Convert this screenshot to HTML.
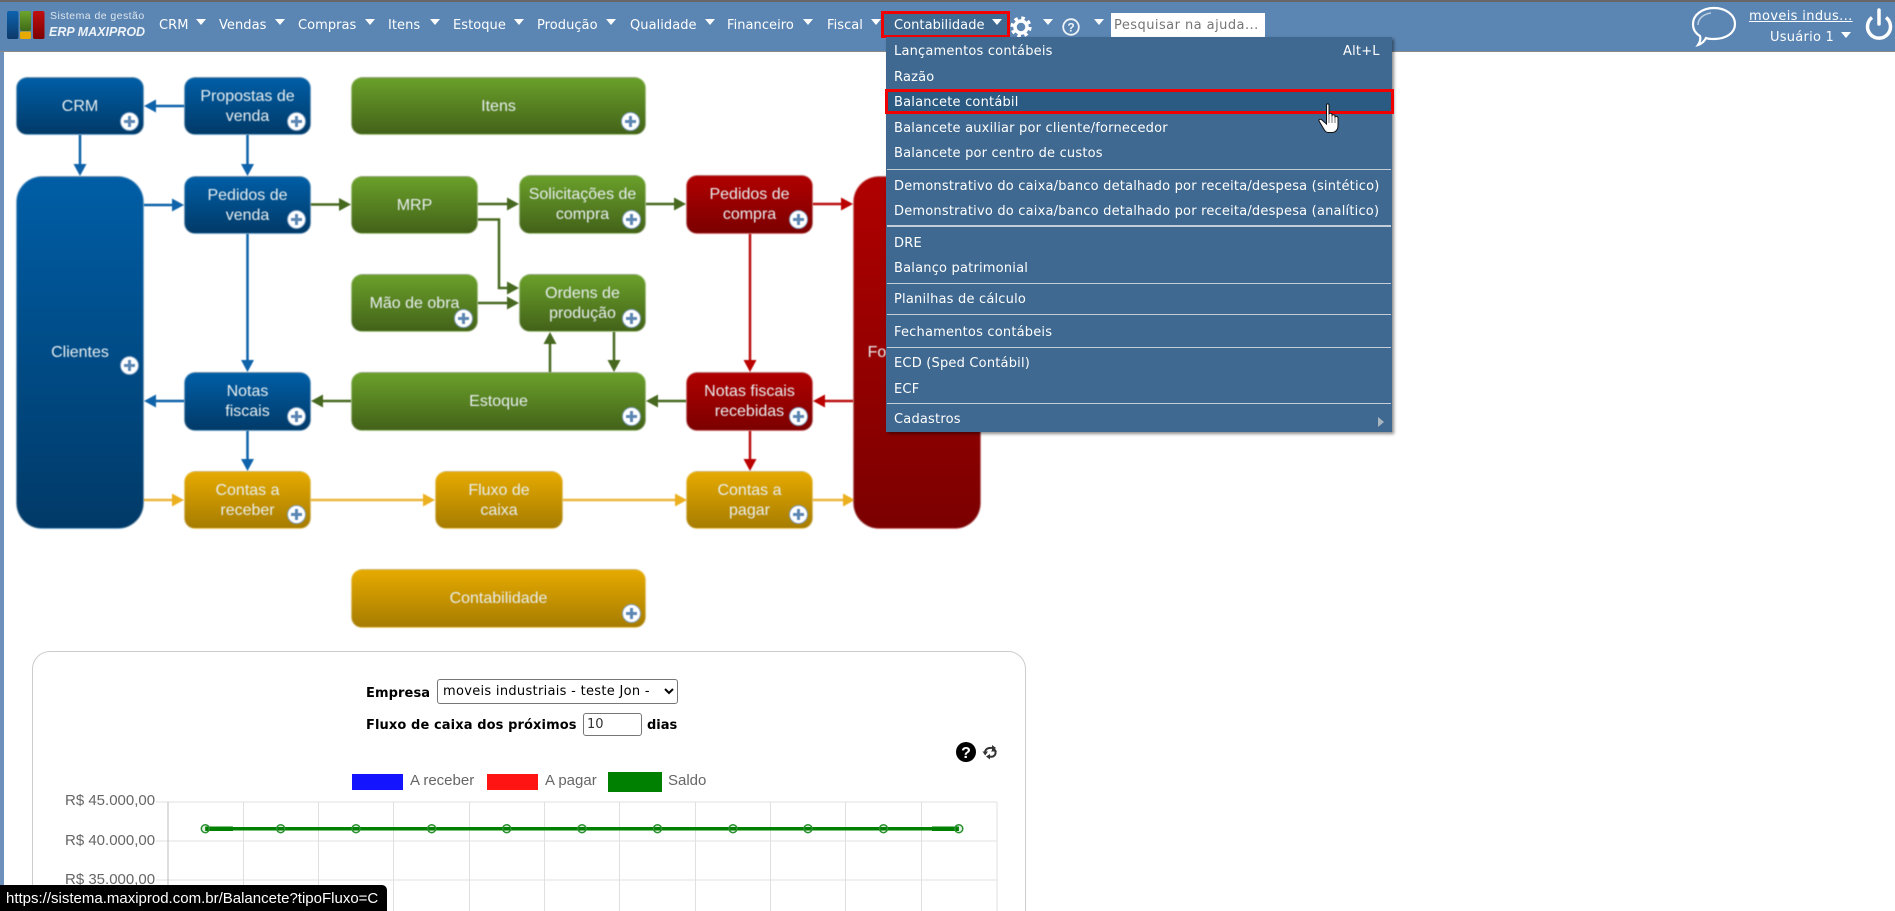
<!DOCTYPE html>
<html lang="pt-BR">
<head>
<meta charset="utf-8">
<title>ERP MAXIPROD</title>
<style>
html,body{margin:0;padding:0;width:1895px;height:911px;overflow:hidden;background:#fff}
body{position:relative;font-family:"DejaVu Sans",Verdana,sans-serif;font-size:13px;color:#000}
.abs{position:absolute;white-space:nowrap}
#strip{position:absolute;left:0;top:0;width:4px;height:911px;background:#6c90bb}
#top{position:absolute;left:0;top:0;width:1895px;height:52px;background:#5b86b3;border-top:2px solid #666;border-bottom:1px solid #8a8a8a;box-sizing:border-box}
.nav{position:absolute;top:17px;height:18px;line-height:18px;color:#fff;font-size:13px;white-space:nowrap;letter-spacing:.05px}
.tri{position:absolute;width:0;height:0;border-left:5px solid transparent;border-right:5px solid transparent;border-top:6px solid #fff;top:19px}
#diagram{position:absolute;left:0;top:0;width:1050px;height:650px;filter:blur(.5px)}
.b{position:absolute;box-sizing:border-box;border:1px solid rgba(255,255,255,.45);border-radius:11px;display:flex;align-items:center;justify-content:center;text-align:center;font-family:"Liberation Sans",Arial,sans-serif;font-size:16px;line-height:20px;color:#e8eef0;padding-top:1px}
.bl{background:linear-gradient(#005ea6,#013a68)}
.gr{background:linear-gradient(#6aa02a,#436219)}
.rd{background:linear-gradient(#b00000,#7c0000)}
.ye{background:linear-gradient(#e6aa00,#a67c00)}
.lg{border-radius:26px}
.p{position:absolute;width:19px;height:19px;box-sizing:border-box;border-radius:50%;background:#fff;border:1px solid #7d9cc0}
.p:before{content:"";position:absolute;left:3px;top:7px;width:11px;height:3px;background:#5b86b3}
.p:after{content:"";position:absolute;left:7px;top:3px;width:3px;height:11px;background:#5b86b3}
#menu{position:absolute;left:886px;top:37px;width:506px;height:395px;background:#3f6990;box-shadow:2px 2px 3px rgba(0,0,0,.45)}
.mi{position:absolute;left:8px;margin-top:1px;color:#fff;font-size:13px;line-height:18px;height:18px;white-space:nowrap;letter-spacing:.2px}
.sep{position:absolute;left:1px;width:504px;height:1px;background:#c3ced9}
#card{position:absolute;left:32px;top:651px;width:994px;height:300px;box-sizing:border-box;border:1px solid #ccc;border-radius:18px;background:#fff}
.lbl{font-weight:bold;font-size:13px;line-height:18px}
.lt{position:absolute;font-family:"Liberation Sans",Arial,sans-serif;font-size:15px;line-height:18px;color:#666;white-space:nowrap}
#status{position:absolute;left:0;top:885px;width:387px;height:26px;background:#000;border-top-right-radius:5px;color:#fff;font-family:"Liberation Sans",Arial,sans-serif;font-size:15px;line-height:27px;padding-left:6px;box-sizing:border-box;white-space:nowrap}
</style>
</head>
<body>
<div id="strip"></div>

<div id="diagram">
<svg width="1050" height="650" style="position:absolute;left:0;top:0">
<g fill="none" stroke-width="2.5">
<g stroke="#0f63aa">
<path d="M184 106H155M80 135V165M247.500 135V165M144 205H173M247.500 234V361M184 401H155M247.500 431V460"/>
</g>
<g stroke="#ecb53f">
<path d="M144 500H173M311 500H424M563 500H675M813 500H843"/>
</g>
<g stroke="#47691f">
<path d="M311 204.500H340M478 204H508M646 204H675M478 219.500H499V288H508M478 303H508M550 372V343M614 332V361M686 401H657M351 401H322"/>
</g>
<g stroke="#bb1010">
<path d="M813 204H842M750 234V361M853 401H824M750 431V460"/>
</g>
</g>
<g fill="#0f63aa">
<path d="M144 106L156 99.500V112.500ZM80 176L73.500 164H86.500ZM247.500 176L241 164H254ZM184 205L172 198.500V211.500ZM247.500 372L241 360H254ZM144 401L156 394.500V407.500ZM247.500 471L241 459H254Z"/>
</g>
<g fill="#ecb01f">
<path d="M184 500L172 493.500V506.500ZM435 500L423 493.500V506.500ZM687 500L675 493.500V506.500ZM855 500L843 493.500V506.500Z"/>
</g>
<g fill="#47691f">
<path d="M351 204.500L339 198V211ZM519 204L507 197.500V210.500ZM686 204L674 197.500V210.500ZM519 288L507 281.500V294.500ZM519 303L507 296.500V309.500ZM550 332L543.500 344H556.500ZM614 372L607.500 360H620.500ZM646 401L658 394.500V407.500ZM311 401L323 394.500V407.500Z"/>
</g>
<g fill="#bb0000">
<path d="M853 204L841 197.500V210.500ZM750 372L743.500 360H756.500ZM813 401L825 394.500V407.500ZM750 471L743.500 459H756.500Z"/>
</g>
</svg>

<div class="b bl" style="left:16px;top:77px;width:128px;height:58px">CRM</div>
<div class="p" style="left:120px;top:112px"></div>
<div class="b bl" style="left:184px;top:77px;width:127px;height:58px">Propostas de<br>venda</div>
<div class="p" style="left:287px;top:112px"></div>
<div class="b gr" style="left:351px;top:77px;width:295px;height:58px">Itens</div>
<div class="p" style="left:621px;top:112px"></div>

<div class="b bl lg" style="left:16px;top:176px;width:128px;height:353px">Clientes</div>
<div class="p" style="left:120px;top:356px"></div>

<div class="b bl" style="left:184px;top:176px;width:127px;height:58px">Pedidos de<br>venda</div>
<div class="p" style="left:287px;top:210px"></div>
<div class="b gr" style="left:351px;top:176px;width:127px;height:58px">MRP</div>
<div class="b gr" style="left:519px;top:175px;width:127px;height:59px">Solicitações de<br>compra</div>
<div class="p" style="left:622px;top:210px"></div>
<div class="b rd" style="left:686px;top:175px;width:127px;height:59px">Pedidos de<br>compra</div>
<div class="p" style="left:789px;top:210px"></div>

<div class="b gr" style="left:351px;top:274px;width:127px;height:58px">Mão de obra</div>
<div class="p" style="left:454px;top:309px"></div>
<div class="b gr" style="left:519px;top:274px;width:127px;height:58px">Ordens de<br>produção</div>
<div class="p" style="left:622px;top:309px"></div>

<div class="b bl" style="left:184px;top:372px;width:127px;height:59px">Notas<br>fiscais</div>
<div class="p" style="left:287px;top:407px"></div>
<div class="b gr" style="left:351px;top:372px;width:295px;height:59px">Estoque</div>
<div class="p" style="left:622px;top:407px"></div>
<div class="b rd" style="left:686px;top:372px;width:127px;height:59px">Notas fiscais<br>recebidas</div>
<div class="p" style="left:789px;top:407px"></div>

<div class="b ye" style="left:184px;top:471px;width:127px;height:58px">Contas a<br>receber</div>
<div class="p" style="left:287px;top:505px"></div>
<div class="b ye" style="left:435px;top:471px;width:128px;height:58px">Fluxo de<br>caixa</div>
<div class="b ye" style="left:686px;top:471px;width:127px;height:58px">Contas a<br>pagar</div>
<div class="p" style="left:789px;top:505px"></div>

<div class="b ye" style="left:351px;top:569px;width:295px;height:59px">Contabilidade</div>
<div class="p" style="left:622px;top:604px"></div>

<div class="b rd lg" style="left:853px;top:176px;width:128px;height:353px">Fornecedores</div>
</div>

<div id="card"></div>
<div class="abs lbl" style="left:366px;top:685px;letter-spacing:.1px">Empresa</div>
<select class="abs" style="left:437px;top:679px;width:241px;height:25px;font-family:'DejaVu Sans',sans-serif;font-size:13px;letter-spacing:.3px;background:#fff;padding:0 0 0 1px;box-sizing:border-box;border:1px solid #767676;border-radius:3px"><option>moveis industriais - teste Jon -</option></select>
<div class="abs lbl" style="left:366px;top:717px;letter-spacing:.1px">Fluxo de caixa dos próximos</div>
<input class="abs" value="10" style="left:583px;top:713px;width:59px;height:23px;box-sizing:border-box;border:1px solid #767676;border-radius:3px;font-family:'DejaVu Sans',sans-serif;font-size:13px;padding:0 3px;color:#333">
<div class="abs lbl" style="left:647px;top:717px">dias</div>

<svg class="abs" style="left:954px;top:740px" width="50" height="24" viewBox="954 740 50 24">
<circle cx="966" cy="752" r="10" fill="#000"/>
<text x="966" y="758" text-anchor="middle" font-family="Liberation Sans,sans-serif" font-weight="bold" font-size="16" fill="#fff">?</text>
<path d="M985 754C984.500 749 988 747.500 992 748M995 750C997 755 993 757.500 990 756.500" fill="none" stroke="#333" stroke-width="2"/>
<path d="M982.500 751.500H988L985.200 755.500ZM992 745V751L996 748ZM990 754V759.500L986 756.500Z" fill="#333"/>
<path d="M994 747.500L997 751.500H991Z" fill="#333"/>
</svg>

<div class="abs" style="left:352px;top:774px;width:51px;height:16px;background:#1414ff"></div>
<div class="lt" style="left:410px;top:772px">A receber</div>
<div class="abs" style="left:487px;top:774px;width:51px;height:16px;background:#ff1414"></div>
<div class="lt" style="left:545px;top:772px">A pagar</div>
<div class="abs" style="left:608px;top:772px;width:54px;height:20px;background:#008000"></div>
<div class="lt" style="left:668px;top:772px">Saldo</div>

<div class="lt" style="left:65px;top:792px">R$ 45.000,00</div>
<div class="lt" style="left:65px;top:832px">R$ 40.000,00</div>
<div class="lt" style="left:65px;top:871px">R$ 35.000,00</div>

<svg class="abs" style="left:0;top:790px" width="1050" height="121" viewBox="0 790 1050 121">
<g stroke="#e0e0e0" stroke-width="1" shape-rendering="crispEdges">
<path d="M156 802H997M156 841H997M156 880H997"/>
<path d="M243.500 802V911M318.500 802V911M393.500 802V911M469.500 802V911M544.500 802V911M619.500 802V911M695.500 802V911M770.500 802V911M845.500 802V911M921.500 802V911M997 802V911"/>
</g>
<path d="M168 802V911" stroke="#bdbdbd" stroke-width="1" shape-rendering="crispEdges"/>
<path d="M205.300 828.700H958.800" stroke="#008000" stroke-width="3.500"/>
<path d="M205.300 828.700H233M932 828.700H958.800" stroke="#008000" stroke-width="4.500"/>
<g fill="rgba(0,128,0,.12)" stroke="#2a9030" stroke-width="1.500">
<circle cx="205.300" cy="828.700" r="4"/><circle cx="280.700" cy="828.700" r="4"/><circle cx="356" cy="828.700" r="4"/><circle cx="431.700" cy="828.700" r="4"/><circle cx="506.700" cy="828.700" r="4"/><circle cx="582" cy="828.700" r="4"/><circle cx="657.500" cy="828.700" r="4"/><circle cx="733" cy="828.700" r="4"/><circle cx="808" cy="828.700" r="4"/><circle cx="883.500" cy="828.700" r="4"/><circle cx="958.800" cy="828.700" r="4"/>
</g>
</svg>

<div id="status">https://sistema.maxiprod.com.br/Balancete?tipoFluxo=C</div>

<div id="top"></div>

<svg class="abs" style="left:7px;top:11px" width="38" height="28" viewBox="0 0 38 28">
<defs>
<linearGradient id="g1" x1="0" y1="0" x2="0" y2="1"><stop offset="0" stop-color="#0d63ad"/><stop offset="1" stop-color="#0c3a6a"/></linearGradient>
<linearGradient id="g2" x1="0" y1="0" x2="0" y2="1"><stop offset="0" stop-color="#6ea52c"/><stop offset="1" stop-color="#3f6a1a"/></linearGradient>
<linearGradient id="g3" x1="0" y1="0" x2="0" y2="1"><stop offset="0" stop-color="#c01010"/><stop offset="1" stop-color="#7c0000"/></linearGradient>
</defs>
<rect x="0" y="0" width="11.500" height="28" rx="2" fill="url(#g1)"/>
<rect x="13" y="0" width="11" height="20" rx="2" fill="url(#g2)"/>
<rect x="13" y="20.500" width="11" height="7.500" rx="1.500" fill="#e6aa00"/>
<rect x="26" y="0" width="11.500" height="28" rx="2" fill="url(#g3)"/>
</svg>
<div class="abs" style="left:50px;top:10px;font-family:'Liberation Sans',sans-serif;font-size:10.500px;line-height:13px;color:#dfe6ee;letter-spacing:.45px">Sistema de gestão</div>
<div class="abs" style="left:49px;top:25px;font-family:'Liberation Sans',sans-serif;font-size:12.500px;line-height:15px;font-weight:bold;font-style:italic;color:#eef3f8">ERP MAXIPROD</div>

<div class="nav" style="left:159px">CRM</div><div class="tri" style="left:196px"></div>
<div class="nav" style="left:219px">Vendas</div><div class="tri" style="left:275px"></div>
<div class="nav" style="left:298px">Compras</div><div class="tri" style="left:365px"></div>
<div class="nav" style="left:388px">Itens</div><div class="tri" style="left:430px"></div>
<div class="nav" style="left:453px">Estoque</div><div class="tri" style="left:514px"></div>
<div class="nav" style="left:537px">Produção</div><div class="tri" style="left:606px"></div>
<div class="nav" style="left:630px">Qualidade</div><div class="tri" style="left:705px"></div>
<div class="nav" style="left:727px">Financeiro</div><div class="tri" style="left:803px"></div>
<div class="nav" style="left:827px">Fiscal</div><div class="tri" style="left:871px"></div>

<div class="abs" style="left:881px;top:11px;width:129px;height:27px;box-sizing:border-box;border:3px solid #f00000;background:#3f6990"></div>
<div class="nav" style="left:894px">Contabilidade</div><div class="tri" style="left:992px"></div>

<svg class="abs" style="left:1008px;top:14px" width="26" height="26" viewBox="0 0 26 26">
<circle cx="13" cy="13" r="6" fill="none" stroke="#fff" stroke-width="3.500"/>
<circle cx="13" cy="13" r="9" fill="none" stroke="#fff" stroke-width="3.200" stroke-dasharray="3.530 3.540"/>
</svg>
<div class="tri" style="left:1043px"></div>
<svg class="abs" style="left:1061px;top:17px" width="20" height="20" viewBox="0 0 20 20">
<circle cx="10" cy="10" r="7.800" fill="none" stroke="#eef3f8" stroke-width="1.800"/>
<text x="10" y="14.500" text-anchor="middle" font-family="Liberation Sans,sans-serif" font-weight="bold" font-size="12" fill="#eef3f8">?</text>
</svg>
<div class="tri" style="left:1094px"></div>
<div class="abs" style="left:1111px;top:13px;width:154px;height:25px;background:#fff;color:#757575;font-size:13px;line-height:26px;padding-left:3px;box-sizing:border-box;overflow:hidden;letter-spacing:.45px">Pesquisar na ajuda...</div>

<svg class="abs" style="left:1688px;top:4px" width="52" height="46" viewBox="1688 4 52 46">
<path d="M1714 8C1726 8 1735 15 1735 24C1735 33 1726 39 1714 39C1711 39 1708 39 1706 38C1704 42 1701 44 1698 45C1700 42 1701 39 1700 36C1695 33 1693 29 1693 24C1693 15 1702 8 1714 8Z" fill="none" stroke="#fff" stroke-width="2.200"/>
<path d="M1698 25C1698 18 1704 14 1711 13" fill="none" stroke="#fff" stroke-opacity=".6" stroke-width="1.500"/>
</svg>
<div class="abs" style="left:1749px;top:8px;color:#fff;font-size:13px;line-height:18px;text-decoration:underline;letter-spacing:.35px">moveis indus...</div>
<div class="abs" style="left:1770px;top:29px;color:#fff;font-size:13px;line-height:18px;letter-spacing:.25px">Usuário 1</div>
<div class="tri" style="left:1841px;top:32px"></div>
<svg class="abs" style="left:1862px;top:6px" width="33" height="36" viewBox="1862 6 33 36">
<path d="M1872 17.500A11.500 11.500 0 1 0 1886 17.500" fill="none" stroke="#fff" stroke-width="3.500"/>
<path d="M1879 10V24" fill="none" stroke="#fff" stroke-width="3.500" stroke-linecap="round"/>
</svg>

<div id="menu">
<div class="mi" style="top:5px">Lançamentos contábeis</div>
<div class="mi" style="top:5px;left:457px">Alt+L</div>
<div class="mi" style="top:31px">Razão</div>
<div class="abs" style="left:-1px;top:52px;width:509px;height:25px;box-sizing:border-box;border:3px solid #f00000;background:#2b5a82"></div>
<div class="mi" style="top:56px">Balancete contábil</div>
<div class="mi" style="top:82px">Balancete auxiliar por cliente/fornecedor</div>
<div class="mi" style="top:107px">Balancete por centro de custos</div>
<div class="sep" style="top:132px"></div>
<div class="mi" style="top:140px">Demonstrativo do caixa/banco detalhado por receita/despesa (sintético)</div>
<div class="mi" style="top:165px">Demonstrativo do caixa/banco detalhado por receita/despesa (analítico)</div>
<div class="sep" style="top:188px;height:2px"></div>
<div class="mi" style="top:197px">DRE</div>
<div class="mi" style="top:222px">Balanço patrimonial</div>
<div class="sep" style="top:246px"></div>
<div class="mi" style="top:253px">Planilhas de cálculo</div>
<div class="sep" style="top:277px"></div>
<div class="mi" style="top:286px">Fechamentos contábeis</div>
<div class="sep" style="top:310px"></div>
<div class="mi" style="top:317px">ECD (Sped Contábil)</div>
<div class="mi" style="top:343px">ECF</div>
<div class="sep" style="top:366px"></div>
<div class="mi" style="top:373px">Cadastros</div>
<div class="abs" style="left:492px;top:380px;width:0;height:0;border-top:5px solid transparent;border-bottom:5px solid transparent;border-left:6px solid #a9b6c2"></div>
</div>

<svg class="abs" style="left:1318px;top:103px" width="22" height="31" viewBox="0 0 22 31">
<path d="M8.500 2C8.500 .5 11 .5 11 2V11C12 10 14 10 14 11.500V12.500C15 11.500 17 11.500 17 13V14C18 13 20 13.500 20 15V23C20 27 17 29.500 14 29.500H10C7 29.500 6 26 4 23L1 18C.5 16.500 2.500 15.500 4 17L8.500 21Z" fill="#fff" stroke="#111" stroke-width="1"/>
<path d="M11 12V20M14 13V20M17 15V20" stroke="#555" stroke-width=".8" fill="none"/>
</svg>
</body>
</html>
